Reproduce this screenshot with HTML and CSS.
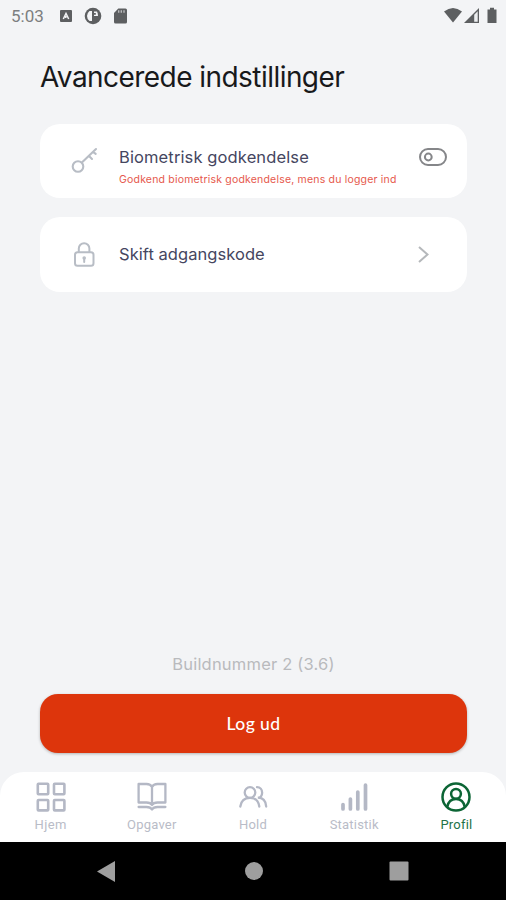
FILE: index.html
```html
<!DOCTYPE html>
<html lang="da">
<head>
<meta charset="utf-8">
<title>Avancerede indstillinger</title>
<link rel="stylesheet" href="styles.css">
</head>
<body>
<div class="screen">
  <header class="status">
    <span class="clock">5:03</span>
    <svg class="st-app" width="12" height="12" viewBox="0 0 12 12"><rect width="12" height="12" rx="1" fill="#5d5f61"/><path d="M3.300 9 6 3.500 8.700 9M5.800 6v2" fill="none" stroke="#f3f4f6" stroke-width="1.500"/></svg>
    <svg class="st-circle" width="18" height="18" viewBox="0 0 18 18"><circle cx="9" cy="9" r="8.300" fill="#5d5f61"/><path d="M8 4H5.500Q3 6 3 9t2.500 5H8z" fill="#f3f4f6"/><path d="M10 4.500h3q1 1.500 1 4.500h-4z" fill="#f3f4f6"/><path d="M10 6h1.800v1.800H10z" fill="#5d5f61"/></svg>
    <svg class="st-sd" width="13" height="16" viewBox="0 0 13 16"><path d="M4.300.5H11.500q1.500 0 1.500 1.500v12q0 1.500-1.500 1.500h-10Q0 15.500 0 14V5z" fill="#5d5f61"/><path d="M4.700 2.200v2.500M7.300 2.200v2.500M10 2.200v2.500" stroke="#b9babc" stroke-width="1.400"/></svg>
    <svg class="st-signal" width="54" height="18" viewBox="0 0 54 18"><path d="M0 4.500Q9-2.500 18 4.500L9 15.500Z" fill="#5d5f61"/><path d="M20 16 35 1v15z" fill="#5d5f61"/><path d="M30.200 7.700 33.700 4.200v10.500h-3.500z" fill="#eceef0"/><path d="M43.500 2.500h2.500V.7h4v1.800h2.500v13.500h-9z" fill="#5d5f61"/></svg>
  </header>
  <main class="content">
    <h1>Avancerede indstillinger</h1>
    <section class="card first">
      <svg class="card-icon key" width="28" height="28" viewBox="0 0 28 28" fill="none" stroke="#b8bdc5" stroke-width="2.100" stroke-linecap="round" stroke-linejoin="round"><circle cx="8" cy="20.500" r="5.300"/><path d="M11.900 16.600 26 3M19 10l3 3M23 5.900l2.700 2"/></svg>
      <div class="card-text">
        <div class="label bio">Biometrisk godkendelse</div>
        <div class="hint">Godkend biometrisk godkendelse, mens du logger ind</div>
      </div>
      <svg class="toggle" width="28" height="18" viewBox="0 0 28 18" fill="none" stroke="#858689" stroke-width="2"><rect x="1" y="1" width="26" height="16" rx="8"/><circle cx="9.300" cy="9" r="3.400"/></svg>
    </section>
    <section class="card">
      <svg class="card-icon" width="28" height="28" viewBox="0 0 28 28" fill="none" stroke="#b8bdc5" stroke-width="2" stroke-linecap="round"><rect x="5" y="11.300" width="18.500" height="13.500" rx="2.500"/><path d="M8.800 11V7.500a5.300 5.300 0 0 1 10.600 0V11"/><path d="M14.200 18v3"/><circle cx="14.200" cy="17" r=".8"/></svg>
      <div class="card-text"><div class="label skift">Skift adgangskode</div></div>
      <svg class="chevron" width="11" height="17" viewBox="0 0 11 17"><path d="M1 1l8.500 7.500L1 16" fill="none" stroke="#b5b8bb" stroke-width="2"/></svg>
    </section>
    <p class="build">Buildnummer 2 (3.6)</p>
    <button class="logout">Log ud</button>
  </main>
  <nav class="tabs">
    <a class="tab"><svg width="32" height="32" viewBox="0 0 32 32" fill="none" stroke="#b4b8c5" stroke-width="2.600"><rect x="2.800" y="2.800" width="10.400" height="10.400" rx=".7"/><rect x="19" y="2.800" width="10.400" height="10.400" rx=".7"/><rect x="2.800" y="19" width="10.400" height="10.400" rx=".7"/><rect x="19" y="19" width="10.400" height="10.400" rx=".7"/></svg><span>Hjem</span></a>
    <a class="tab"><svg width="32" height="32" viewBox="0 0 32 32" fill="none" stroke="#b4b8c5" stroke-width="2.300" stroke-linejoin="round" stroke-linecap="round"><path d="M16 6Q14.500 3 10.500 3H2.600v18.500h7.900q4 0 5.500 2.500 1.500-2.500 5.500-2.500h7.900V3h-7.900Q17.500 3 16 6zM16 6v17.500M2.600 26h7.900q4 0 5.500 2.500 1.500-2.500 5.500-2.500h7.900"/></svg><span class="wide">Opgaver</span></a>
    <a class="tab"><svg width="32" height="32" viewBox="0 0 32 32" fill="none" stroke="#b4b8c5" stroke-width="2.300" stroke-linecap="round"><circle cx="13" cy="11.500" r="5.300"/><path d="M3.300 25.500C4 20 7.500 16.800 13 16.800S21.500 20 22.300 25.500M20 6.200c6.600 0 6.800 10.500.8 10.500 5 0 8 3.500 8.400 8.800"/></svg><span class="wide">Hold</span></a>
    <a class="tab"><svg width="32" height="32" viewBox="0 0 32 32" stroke="#b4b8c5" stroke-width="3.700" stroke-linecap="round"><path d="M5 23.500V28M12.400 18v10M19.800 11v17M27.500 4v24"/></svg><span class="wide">Statistik</span></a>
    <a class="tab active"><svg width="32" height="32" viewBox="0 0 32 32" fill="none" stroke="#0c6535" stroke-width="2.500"><circle cx="16" cy="16" r="13.500"/><circle cx="16" cy="12.800" r="4.900"/><path d="M7.200 26q1.500-8 8.800-8t8.800 8"/></svg><span class="wide">Profil</span></a>
  </nav>
  <footer class="sysnav">
    <svg width="18" height="21" viewBox="0 0 18 21"><path d="M0 10.500 18 0v21z" fill="#9e9e9e"/></svg>
    <svg class="home" width="18" height="18" viewBox="0 0 18 18"><circle cx="9" cy="9" r="9" fill="#9e9e9e"/></svg>
    <svg width="20" height="20" viewBox="0 0 20 20"><rect x=".5" y=".5" width="19" height="19" rx="1" fill="#9e9e9e"/></svg>
  </footer>
</div>
</body>
</html>
```
FILE: styles.css
```css
* { box-sizing: border-box; }
body { margin: 0; font-family: Inter, "Liberation Sans", sans-serif; background: #f3f4f6; }
svg { display: block; flex: none; }
.screen { width: 506px; height: 900px; display: flex; flex-direction: column; overflow: hidden; }
.status { height: 32px; display: flex; align-items: center; padding: 0 8px 0 11px; flex: none; }
.clock { width: 49px; font: 400 17px/32px Roboto, sans-serif; color: #7c7e80; }
.st-circle { margin-left: 12px; }
.st-sd { margin-left: 12px; }
.st-signal { margin-left: auto; }
.content { flex: 1; display: flex; flex-direction: column; padding: 0 39px 19px 40px; }
h1 { margin: 26px 0 27px; font-size: 28px; line-height: 39px; font-weight: 400; letter-spacing: -0.55px; color: #18191b; white-space: nowrap; }
.card { height: 75px; flex: none; display: flex; align-items: center; background: #fff; border-radius: 20px; padding: 0 20px 0 30px; }
.first { height: 74px; margin-bottom: 19px; }
.card-text { margin-left: 21px; flex: 1; white-space: nowrap; }
.label { font-size: 16.5px; line-height: 22px; letter-spacing: 0.12px; color: #45465f; font-weight: 400; }
.skift { letter-spacing: 0.05px; margin-top: -1px; }
.bio { margin-top: 10px; }
.hint { font-size: 10.5px; line-height: 14px; letter-spacing: 0.19px; margin-top: 5px; color: #e6584c; font-weight: 400; }
.key { margin-top: -2px; }
.toggle { margin-top: -8px; }
.chevron { margin-right: 18px; }
.build { margin: auto 0 19px; text-align: center; font-size: 16.5px; line-height: 22px; letter-spacing: 0.2px; font-weight: 400; color: #b9babd; }
.logout { height: 59px; border: 0; border-radius: 18px; background: #dd350c; color: #fff; font: 500 17.5px/22px Lato, sans-serif; letter-spacing: 0.4px; box-shadow: 0 1px 3px #0004; padding: 0; flex: none; }
.tabs { height: 70px; flex: none; display: grid; grid-template-columns: repeat(5, 1fr); background: #fff; border-radius: 24px 24px 0 0; padding-top: 9px; }
.tab { display: flex; flex-direction: column; align-items: center; color: #b9bcc7; font: 400 13px/16px Roboto, sans-serif; }
.tab span { margin-top: 4px; letter-spacing: 0.4px; }
.tab .wide { letter-spacing: 0.2px; }
.active { color: #237348; }
.tab.active svg, .tab.active span { margin-left: 2px; }
.sysnav { height: 58px; flex: none; background: #000; display: flex; align-items: center; justify-content: space-between; padding: 0 97px; }
.home { margin-left: 3px; }
```
